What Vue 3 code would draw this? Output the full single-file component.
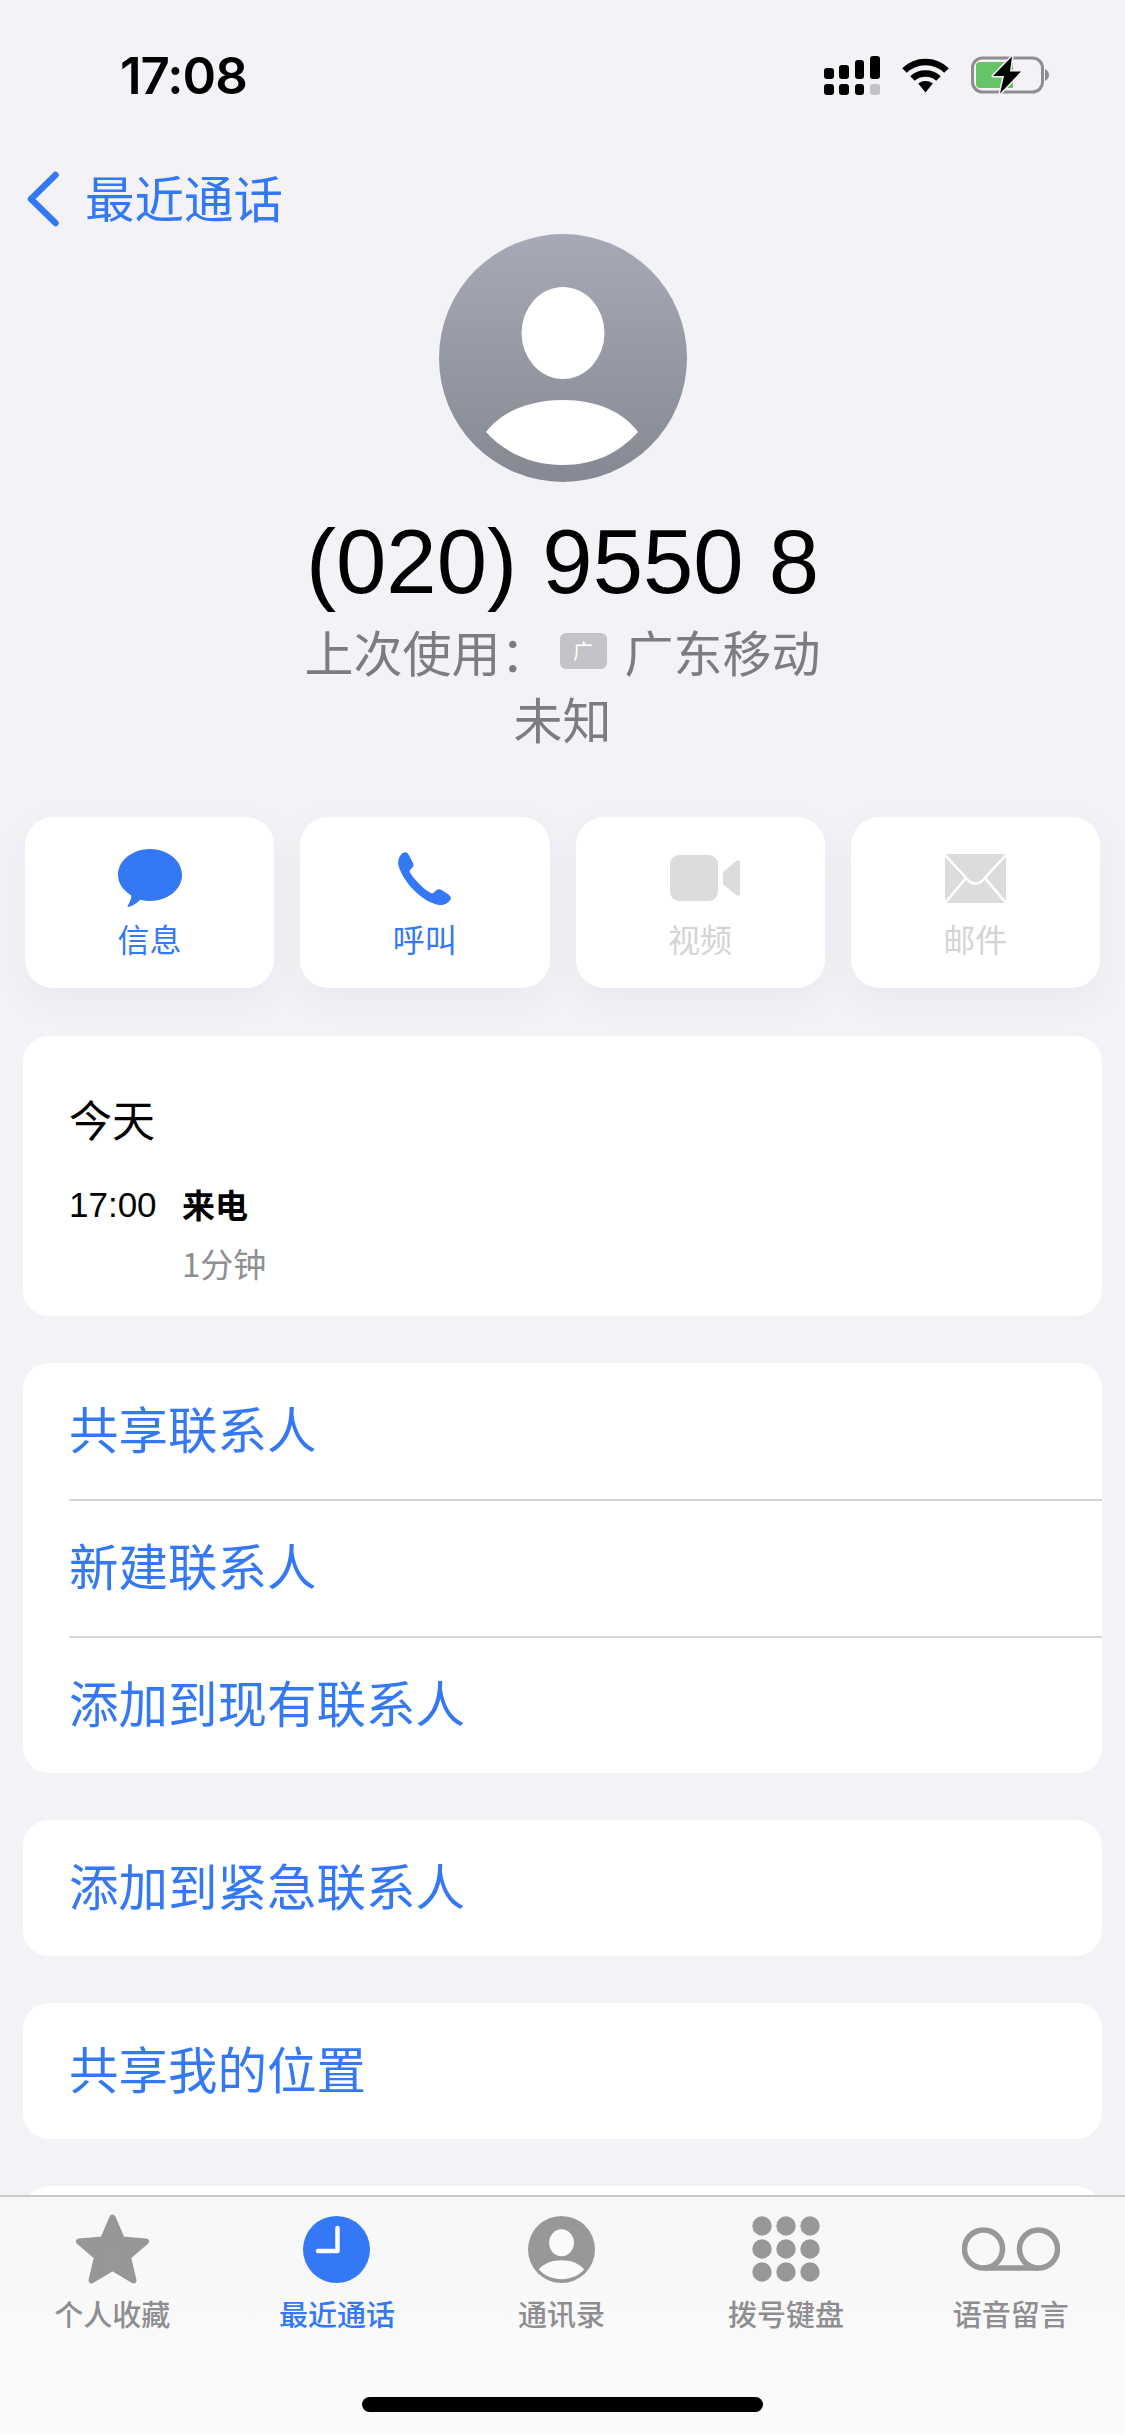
<script setup>
const actions = [
  { key: 'message', label: '信息', enabled: true },
  { key: 'call', label: '呼叫', enabled: true },
  { key: 'video', label: '视频', enabled: false },
  { key: 'mail', label: '邮件', enabled: false },
]

const groups = [
  ['共享联系人', '新建联系人', '添加到现有联系人'],
  ['添加到紧急联系人'],
  ['共享我的位置'],
  [''],
]

const tabs = [
  { key: 'star', label: '个人收藏' },
  { key: 'clock', label: '最近通话', active: true },
  { key: 'contact', label: '通讯录' },
  { key: 'keypad', label: '拨号键盘' },
  { key: 'voicemail', label: '语音留言' },
]

const keypadDots = []
for (let row = 0; row < 3; row++) {
  for (let col = 0; col < 3; col++) {
    keypadDots.push({ cx: 10 + col * 24, cy: 10 + row * 23 })
  }
}
</script>

<template>
  <div class="screen">
    <div class="status">
      <span class="time">17:08</span>
      <div class="status-icons">
        <svg class="signal" width="56" height="39" viewBox="0 0 56 39" fill="#000">
          <rect x="0" y="12" width="10" height="11" rx="3" />
          <rect x="15" y="9" width="10" height="14" rx="3" />
          <rect x="31" y="4" width="9" height="19" rx="3" />
          <rect x="46" y="0" width="10" height="23" rx="3" />
          <rect x="0" y="28" width="10" height="11" rx="3" />
          <rect x="15" y="28" width="10" height="11" rx="3" />
          <rect x="31" y="28" width="9" height="11" rx="3" />
          <rect x="46" y="28" width="10" height="11" rx="3" fill="#c2c2c4" />
        </svg>
        <svg class="wifi" width="47" height="36" viewBox="0 0 47 36" fill="none" stroke="#000" stroke-width="6.5">
          <path d="M2.5 13.5 C14 2 33 2 44.5 13.5" />
          <path d="M10.5 21.5 C17.5 14.8 29.5 14.8 36.5 21.5" />
          <path d="M16.2 26.5 L23.5 35.5 L30.8 26.5 C26.5 23.2 20.5 23.2 16.2 26.5 Z" fill="#000" stroke="none" />
        </svg>
        <svg class="battery" width="78" height="38" viewBox="0 0 78 38">
          <rect x="1.5" y="2" width="70" height="34" rx="10" fill="none" stroke="#8e8e92" stroke-width="3" />
          <path d="M74 13 C76.5 14 78 16.5 78 19 C78 21.5 76.5 24 74 25 Z" fill="#8e8e92" />
          <path d="M5 10 a4 4 0 0 1 4 -4 H42 V32 H9 a4 4 0 0 1 -4 -4 Z" fill="#65c466" />
          <path d="M41 0.5 L22 20 H33 L29 37.5 L50 15.5 H39 Z" fill="#000" stroke="#f2f2f7" stroke-width="3" stroke-linejoin="round" paint-order="stroke" />
        </svg>
      </div>
    </div>

    <div class="nav">
      <svg width="34" height="56" viewBox="0 0 34 56" fill="none" stroke="#3478f6" stroke-width="6.5" stroke-linecap="round" stroke-linejoin="round">
        <path d="M29.5 4 L5 28 L29.5 52" />
      </svg>
      <span class="nav-title">最近通话</span>
    </div>

    <svg class="avatar" width="248" height="248" viewBox="0 0 248 248">
      <defs>
        <linearGradient id="avatarFill" x1="0" y1="0" x2="0" y2="1">
          <stop offset="0" stop-color="#a7aab6" />
          <stop offset="1" stop-color="#858993" />
        </linearGradient>
      </defs>
      <circle cx="124" cy="124" r="124" fill="url(#avatarFill)" />
      <ellipse cx="124" cy="99" rx="41.5" ry="46" fill="#fff" />
      <path d="M47 198 C62 178 90 166 124 166 C158 166 184 178 199 198 C180 219 155 231 124 231 C93 231 66 219 47 198 Z" fill="#fff" />
    </svg>

    <div class="number">(020) 9550 8</div>
    <div class="sub">上次使用：<span class="sim"><span>广</span></span>广东移动</div>
    <div class="sub">未知</div>

    <div class="actions">
      <div v-for="item in actions" :key="item.key" class="action" :class="{ disabled: !item.enabled }">
        <div class="action-icon" :class="item.key">
          <svg v-if="item.key === 'message'" width="64" height="58" viewBox="0 0 64 58">
            <path d="M32 0 C49.7 0 64 11.6 64 26 C64 40.4 49.7 52 32 52 C28.6 52 25.3 51.6 22.2 50.8 C18.5 54.6 14 57.4 10.6 58 C9.6 58.1 9.2 57.2 9.8 56.4 C11.8 53.8 13.2 49.8 13.4 46.4 C5.2 41.6 0 34.3 0 26 C0 11.6 14.3 0 32 0 Z" fill="#3478f6" />
          </svg>
          <svg v-else-if="item.key === 'call'" width="53" height="53" viewBox="0 0 53 53">
            <path d="M4 1.5 C6.5 -0.5 9 0 10.5 2.5 L15 11 C16 13 15.5 14.5 14 16 L12 18 C11.5 18.7 11.5 19.5 12 20.5 C15 26 25 37 33 41 C34 41.5 34.7 41.5 35.3 41 L38 38.5 C39.5 37 41.5 36.7 43.5 38 L50.5 42.5 C53 44.5 53.5 47 51.5 49 C48.5 52 45 53.5 41 53 C24 50 5 30 0.5 13.5 C-0.5 9 1 4.5 4 1.5 Z" fill="#3478f6" />
          </svg>
          <svg v-else-if="item.key === 'video'" width="70" height="46" viewBox="0 0 70 46" fill="#dcdcdc">
            <rect x="0" y="0" width="48" height="46" rx="9" />
            <path d="M53 17 L66 6 C68 4.5 70 5.5 70 8 V38 C70 40.5 68 41.5 66 40 L53 29 Z" />
          </svg>
          <svg v-else width="61" height="49" viewBox="0 0 61 49">
            <rect x="0" y="0" width="61" height="49" rx="2" fill="#dcdcdc" />
            <path d="M0 1 L24 27 C27.5 30.5 33.5 30.5 37 27 L61 1 M0 49 L21 24 M61 49 L40 24" fill="none" stroke="#fff" stroke-width="2.5" />
          </svg>
        </div>
        <span class="action-label">{{ item.label }}</span>
      </div>
    </div>

    <div class="cards">
      <div class="card history">
        <div class="history-day">今天</div>
        <div class="history-row">
          <span class="history-time">17:00</span>
          <span class="history-type">来电</span>
        </div>
        <div class="history-length">1分钟</div>
      </div>

      <div v-for="(group, i) in groups" :key="i" class="card">
        <div v-for="row in group" :key="row" class="row">{{ row }}</div>
      </div>
    </div>

    <div class="tabbar">
      <div v-for="tab in tabs" :key="tab.key" class="tab" :class="{ active: tab.active }">
        <div class="tab-icon">
          <svg v-if="tab.key === 'star'" width="73" height="70" viewBox="0 0 73 70">
            <path d="M36.5 3.5 L46 25.5 L70 27.5 L52 43 L57.5 66.5 L36.5 54 L15.5 66.5 L21 43 L3 27.5 L27 25.5 Z" fill="#989696" stroke="#989696" stroke-width="6" stroke-linejoin="round" />
          </svg>
          <svg v-else-if="tab.key === 'clock'" width="67" height="67" viewBox="0 0 67 67">
            <circle cx="33.5" cy="33.5" r="33.5" fill="#3478f6" />
            <path d="M34.5 12 V35 H15" fill="none" stroke="#fff" stroke-width="4.5" stroke-linecap="round" stroke-linejoin="round" />
          </svg>
          <svg v-else-if="tab.key === 'contact'" width="67" height="67" viewBox="0 0 248 248">
            <circle cx="124" cy="124" r="124" fill="#989899" />
            <ellipse cx="124" cy="99" rx="46" ry="50" fill="#fafafa" />
            <path d="M40 198 C58 176 90 164 124 164 C158 164 190 176 208 198 C186 222 157 234 124 234 C91 234 62 222 40 198 Z" fill="#fafafa" />
          </svg>
          <svg v-else-if="tab.key === 'keypad'" width="68" height="66" viewBox="0 0 68 66" fill="#989899">
            <circle v-for="dot in keypadDots" :key="dot.cx + '-' + dot.cy" :cx="dot.cx" :cy="dot.cy" r="9.7" />
          </svg>
          <svg v-else width="98" height="44" viewBox="0 0 98 44" fill="none" stroke="#989899" stroke-width="5.5">
            <circle cx="21.5" cy="22" r="19" />
            <circle cx="76.5" cy="22" r="19" />
            <path d="M21.5 41 H76.5" />
          </svg>
        </div>
        <span class="tab-label">{{ tab.label }}</span>
      </div>
      <div class="home-bar"></div>
    </div>
  </div>
</template>

<style>
html, body {
  margin: 0;
  background: #f2f2f7;
}
</style>

<style scoped>
.screen {
  position: relative;
  width: 1125px;
  height: 2435px;
  overflow: hidden;
  background: #f2f2f7;
  font-family: "Liberation Sans", "Noto Sans CJK SC", sans-serif;
  display: flex;
  flex-direction: column;
}

.status {
  height: 108px;
  flex: none;
  box-sizing: border-box;
  padding: 42px 76px 0 120px;
  display: flex;
  justify-content: space-between;
  align-items: center;
}

.time {
  font-family: Inter, sans-serif;
  font-weight: 600;
  font-size: 51px;
  letter-spacing: -1px;
  color: #000;
}

.status-icons {
  display: flex;
  align-items: center;
  gap: 22px;
}

.nav {
  flex: none;
  height: 70px;
  margin-top: 56px;
  padding-left: 26px;
  display: flex;
  align-items: center;
  gap: 25px;
  color: #3478f6;
}

.nav-title {
  padding-bottom: 6px;
  font-size: 49.5px;
  font-family: "Noto Sans CJK SC", sans-serif;
}

.avatar {
  flex: none;
  align-self: center;
}

.number {
  margin-top: 30px;
  line-height: 100px;
  font-size: 90.5px;
  text-align: center;
  color: #000;
}

.sub {
  line-height: 67px;
  font-size: 49px;
  font-family: "Noto Sans CJK SC", sans-serif;
  text-align: center;
  color: #7d7d80;
  display: flex;
  justify-content: center;
  align-items: center;
}

.number + .sub {
  margin-top: 5px;
}

.sim {
  width: 47px;
  height: 36px;
  margin: 0 18px 0 10px;
  border-radius: 6px;
  background: #c4c4c8;
  color: #fff;
  font-size: 20px;
  line-height: 36px;
  display: flex;
  justify-content: center;
}

.actions {
  margin: 66px 25px 0;
  display: grid;
  grid-template-columns: repeat(4, 1fr);
  gap: 26px;
}

.action {
  height: 171px;
  box-sizing: border-box;
  padding-top: 28px;
  border-radius: 28px;
  background: #fff;
  box-shadow: 0 12px 36px rgba(60, 60, 90, 0.05);
  display: flex;
  flex-direction: column;
  align-items: center;
  color: #3478f6;
}

.action.disabled {
  color: #d4d4d6;
}

.action-icon {
  height: 66px;
  display: flex;
  align-items: center;
  justify-content: center;
}

.action-icon.video {
  margin-left: 9px;
}

.action-label {
  margin-top: 4px;
  font-size: 32px;
  line-height: 46px;
  font-family: "Noto Sans CJK SC", sans-serif;
}

.cards {
  margin: 48px 23px 0;
  display: flex;
  flex-direction: column;
  gap: 47px;
}

.card {
  flex: none;
  border-radius: 26px;
  background: #fff;
  overflow: hidden;
  font-family: "Noto Sans CJK SC", sans-serif;
}

.history {
  height: 280px;
  box-sizing: border-box;
  padding: 57px 46px 0;
  color: #000;
}

.history-day {
  font-size: 43px;
  line-height: 50px;
}

.history-row {
  margin-top: 31px;
  display: flex;
  align-items: center;
  line-height: 58px;
}

.history-time {
  width: 113px;
  padding-top: 2px;
  font-size: 35px;
  font-family: "Liberation Sans", sans-serif;
}

.history-type {
  font-size: 33px;
  font-weight: 700;
}

.history-length {
  padding-left: 113px;
  font-size: 33px;
  line-height: 58px;
  color: #8e8e93;
}

.row {
  height: 136px;
  box-sizing: border-box;
  margin-left: 46px;
  padding-bottom: 8px;
  display: flex;
  align-items: center;
  font-size: 49.5px;
  color: #3478f6;
}

.row + .row {
  height: 137px;
  border-top: 2px solid #d6d6d9;
}

.tabbar {
  position: absolute;
  left: 0;
  right: 0;
  bottom: 0;
  height: 240px;
  box-sizing: border-box;
  border-top: 2px solid #c9c9cc;
  background: linear-gradient(180deg, #f8f7f8 0%, #fbfbfc 100%);
  display: grid;
  grid-template-columns: repeat(5, 1fr);
  align-items: start;
  padding: 17px 2px 0 0;
}

.tab {
  display: flex;
  flex-direction: column;
  align-items: center;
  color: #8e8e90;
  font-weight: 500;
}

.tab.active {
  color: #3478f6;
}

.tab-icon {
  height: 70px;
  display: flex;
  align-items: center;
  justify-content: center;
}

.tab-label {
  margin-top: 9px;
  font-size: 29px;
  line-height: 40px;
  font-family: "Noto Sans CJK SC", sans-serif;
}

.home-bar {
  position: absolute;
  left: 362px;
  bottom: 23px;
  width: 401px;
  height: 15px;
  border-radius: 8px;
  background: #000;
}
</style>
